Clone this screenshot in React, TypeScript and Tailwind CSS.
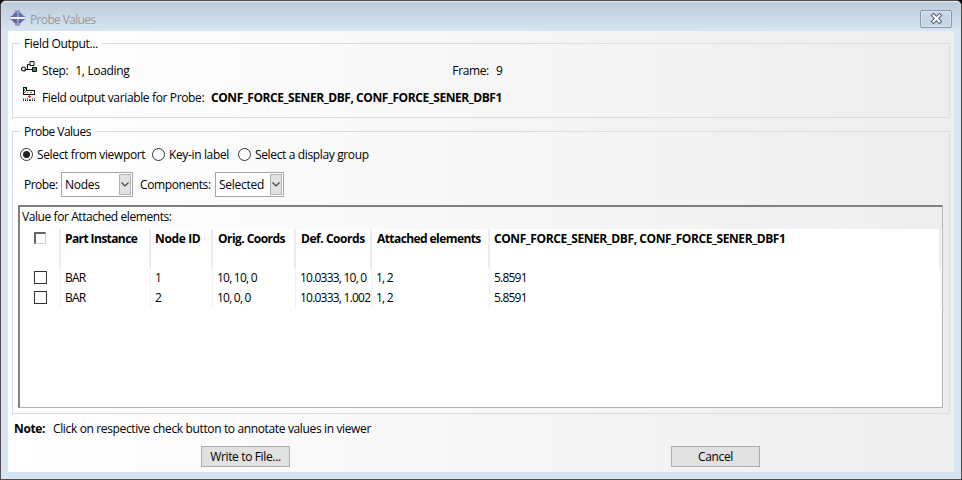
import type { ReactNode } from "react";

const columns = [
  { title: "Part Instance", width: "w-[90px]", head: "pl-1 tracking-[-0.6px]" },
  { title: "Node ID", width: "w-[62px]", head: "pl-1 tracking-[-0.35px]" },
  { title: "Orig. Coords", width: "w-[83px]", head: "pl-[5px] tracking-[-0.55px]" },
  { title: "Def. Coords", width: "w-[76px]", head: "pl-[5px] tracking-[-0.45px]" },
  { title: "Attached elements", width: "w-[118px]", head: "pl-[5px] tracking-[-0.58px]" },
  { title: "CONF_FORCE_SENER_DBF, CONF_FORCE_SENER_DBF1", width: "w-[451px]", head: "pl-1 tracking-[-0.42px]" },
];

const rows = [
  ["BAR", "1", "10, 10, 0", "10.0333, 10, 0", "1, 2", "5.8591"],
  ["BAR", "2", "10, 0, 0", "10.0333, 1.002", "1, 2", "5.8591"],
];

function AppIcon() {
  return (
    <svg width="16" height="16" viewBox="0 0 16 16" className="block">
      <path d="M5 0.5h5v3h-5z M5 12.5h5v3h-5z" fill="#8484b8" />
      <path d="M4 3h7l1.5 2L15.5 7H0L3 5z M0 9h15.5l-3 2L11 13H4l-1-2z" fill="#6666a8" />
      <path d="M7 0.5h2V7H7z M7 9h2v6.5H7z" fill="#9a9acb" />
      <path d="M1 7h13.5v1.8H1z" fill="#f4f5fb" />
    </svg>
  );
}

function StepIcon() {
  return (
    <svg width="17" height="12" viewBox="0 0 17 12" className="block">
      <circle cx="2.5" cy="8" r="2" fill="#fff" stroke="#111" strokeWidth="1.2" />
      <path d="M5 8.5h6M6.5 8V3.5H9" fill="none" stroke="#111" />
      <path d="M9 0.5h4v4H9z" fill="#fff" stroke="#111" />
      <path d="M11.5 6.5h4v4h-4z" fill="#2f9e35" stroke="#111" />
    </svg>
  );
}

function FieldIcon() {
  return (
    <svg width="14" height="15" viewBox="0 0 14 15" className="block" shapeRendering="crispEdges">
      <path d="M1.5 7.5v-7h3v3h8v4z" fill="#fff" stroke="#111" />
      <path d="M2 2h1v2H2zM8 5h2v1H8z" fill="#2f9e35" />
      <path d="M3 1h1v1H3zM2 5h1v1H2zM3 4h1v1H3zM5 5h1v1H5z" fill="#d22" />
      <path d="M7 7h1v4H7zM6 9h3v1H6z" fill="#d22" />
      <path d="M1 11h1v3H1zM3 11h1v3H3zM5 11h1v3H5zM7 12h2v2H7zM10 11h1v3h-1zM12 11h1v3h-1z" fill="#777" />
      <path d="M1 13h1v1H1zM3 13h1v1H3zM5 13h1v1H5zM7 13h2v1H7zM10 13h1v1h-1zM12 13h1v1h-1z" fill="#222" />
    </svg>
  );
}

function Radio({ on, children, gap }: { on?: boolean; children: ReactNode; gap: string }) {
  return (
    <label className={`flex items-center ${gap}`}>
      <span className="mr-1 flex size-[13px] shrink-0 items-center justify-center rounded-full border border-[#333] bg-white">
        {on && <span className="size-[7px] rounded-full bg-[#222]" />}
      </span>
      {children}
    </label>
  );
}

function Select({ value, width }: { value: string; width: string }) {
  return (
    <div className={`flex h-[25px] items-stretch border border-[#a5a5ab] bg-white p-px ${width}`}>
      <span className="flex flex-1 items-center pt-px pl-[2px] leading-none tracking-[-0.25px]">{value}</span>
      <span className="flex w-[12px] items-center justify-center border border-[#b4b4b4] bg-[#e1e1e1]">
        <svg width="8" height="5" viewBox="0 0 8 5" className="shrink-0">
          <path d="M0.5 0.5L4 4L7.5 0.5" fill="none" stroke="#444" strokeWidth="1.2" />
        </svg>
      </span>
    </div>
  );
}

function Button({ children, margin }: { children: ReactNode; margin: string }) {
  return (
    <button className={`h-[21px] w-[89px] border border-[#adadad] bg-[#e1e1e1] text-center leading-[20px] ${margin}`}>
      {children}
    </button>
  );
}

export default function App() {
  return (
    <div className="h-[480px] w-[962px] overflow-hidden bg-black font-['Open_Sans','Noto_Sans',sans-serif] text-[12px] leading-[17px] tracking-[-0.36px] text-black">
      <div className="flex h-[480px] w-[962px] flex-col rounded-t-[6px] border border-[#504c50] bg-[#d7e4f2] px-[7px]">
        <header className="-mx-[7px] flex h-[30px] shrink-0 items-center rounded-t-[5px] border-t border-[#e9eef5] bg-linear-to-b from-[#bdcad9] to-[#d8e5f2] pr-[9px] pl-[9px] text-[#999]">
          <span className="mt-[3px]">
            <AppIcon />
          </span>
          <span className="mt-[6px] ml-[4px] tracking-[-0.65px]">Probe Values</span>
          <span className="mt-[4px] ml-auto flex h-[18px] w-[32px] items-center justify-center rounded-[2px] border border-[#8795b3] bg-[#c7d5e4] shadow-[inset_0_0_0_1px_#dbe6f2]">
            <svg width="13" height="11" viewBox="0 0 13 11">
              <path d="M3.5 2.5L9.5 8.5M9.5 2.5L3.5 8.5" stroke="#555a68" strokeWidth="4" strokeLinecap="square" />
              <path d="M3.5 2.5L9.5 8.5M9.5 2.5L3.5 8.5" stroke="#fff" strokeWidth="2" strokeLinecap="square" />
            </svg>
          </span>
        </header>

        <main className="h-[441px] shrink-0 bg-linear-to-r from-white to-[#eeeeee] px-1 pt-1">
          <fieldset className="h-[83px] border border-[#dcdcdc] px-[7px]">
            <legend className="px-1 pt-px leading-4 tracking-[-0.33px]">Field Output...</legend>
            <div className="flex h-[36px] items-center pt-px">
              <div className="mb-[7px] w-[22px] pl-[1px]">
                <StepIcon />
              </div>
              <span>Step:</span>
              <span className="ml-[7px] w-[377px] tracking-[-0.33px]">1, Loading</span>
              <span>Frame:</span>
              <span className="ml-[7px]">9</span>
            </div>
            <div className="flex h-[18px] items-center">
              <div className="mb-[6px] w-[22px] pl-[2px]">
                <FieldIcon />
              </div>
              <span className="w-[169px]">Field output variable for Probe:</span>
              <b className="font-bold tracking-[-0.43px]">CONF_FORCE_SENER_DBF, CONF_FORCE_SENER_DBF1</b>
            </div>
          </fieldset>

          <fieldset className="mt-[5px] h-[291px] border border-[#dcdcdc] px-[5px]">
            <legend className="ml-[2px] px-1 pt-px leading-4 tracking-[-0.53px]">Probe Values</legend>
            <div className="flex h-[29px] items-center pl-[2px]">
              <Radio on gap="w-[132px]">Select from viewport</Radio>
              <Radio gap="w-[86px]">Key-in label</Radio>
              <Radio gap="w-[140px]">Select a display group</Radio>
            </div>
            <div className="flex h-[31px] items-center pl-[6px]">
              <span className="w-[37px] tracking-[-0.5px]">Probe:</span>
              <Select value="Nodes" width="w-[72px]" />
              <span className="ml-[7px] w-[75px] tracking-[-0.4px]">Components:</span>
              <Select value="Selected" width="w-[69px]" />
            </div>

            <section className="mt-[5px] flex h-[203px] w-[925px] flex-col border border-t-2 border-l-2 border-[#b4b4b8] border-t-[#808080] border-l-[#808080]">
              <div className="h-[22px] shrink-0 pt-px pl-[2px] tracking-[-0.42px]">Value for Attached elements:</div>
              <div className="flex-1 bg-white">
                <div className="flex h-[39px]">
                  <div className="w-[41px] border-r-2 border-[#ececec] pt-[3px] pl-[14px]">
                    <div className="size-[12px] border border-t-2 border-l-2 border-[#d4d0c8] border-t-[#666] border-l-[#666] bg-white" />
                  </div>
                  {columns.map((c, i) => (
                    <div key={i} className={`border-r-2 border-[#ececec] pt-px font-bold whitespace-nowrap ${c.width} ${c.head}`}>
                      {c.title}
                    </div>
                  ))}
                </div>
                {rows.map((r, y) => (
                  <div key={y} className="flex h-5">
                    <div className="w-[41px] border-r border-[#f2f2f2] pt-[3px] pl-[14px]">
                      <div className="size-[13px] border border-[#333] bg-white" />
                    </div>
                    {r.map((v, i) => (
                      <div
                        key={i}
                        className={`border-r border-[#f2f2f2] pt-px pl-1 tracking-[-0.78px] whitespace-nowrap ${columns[i].width}`}
                      >
                        {v}
                      </div>
                    ))}
                  </div>
                ))}
              </div>
            </section>
          </fieldset>

          <div className="mt-[5px] flex h-[18px] items-center pl-[2px]">
            <b className="w-[39px] font-bold">Note:</b>
            <span>Click on respective check button to annotate values in viewer</span>
          </div>
          <div className="mt-[9px] flex">
            <Button margin="ml-[189px]">Write to File...</Button>
            <Button margin="ml-[381px]">Cancel</Button>
          </div>
        </main>
      </div>
    </div>
  );
}
